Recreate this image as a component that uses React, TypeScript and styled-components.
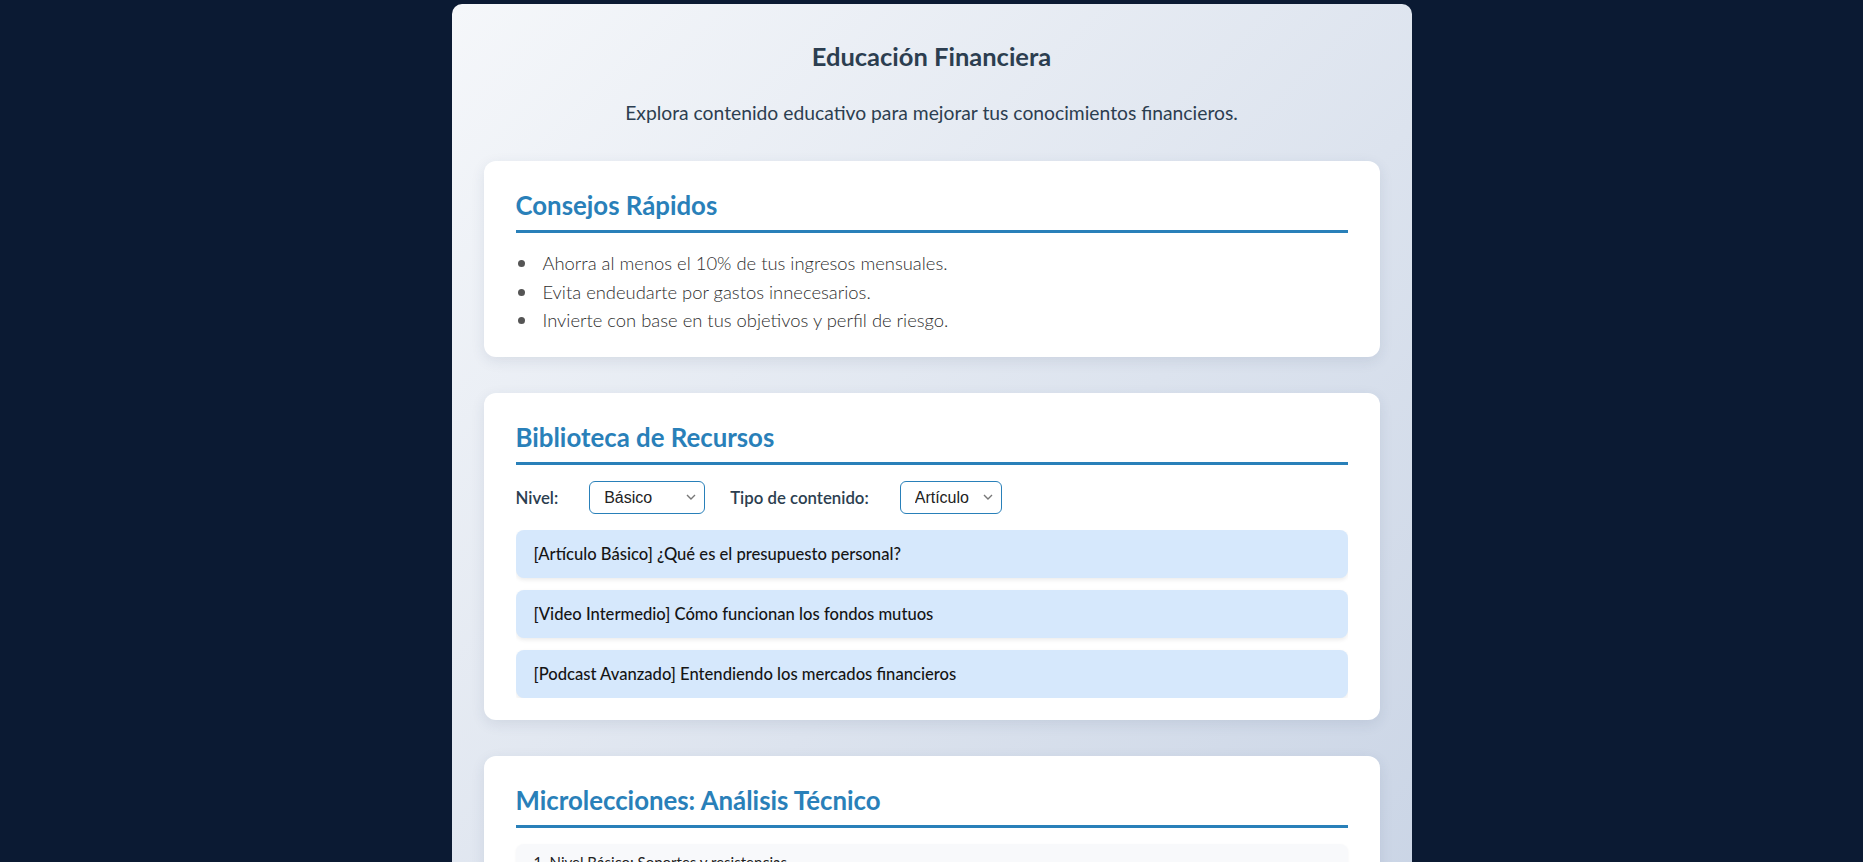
import React, { useState } from 'react'
import styled, { createGlobalStyle } from 'styled-components'

const GlobalStyle = createGlobalStyle`
  html, body {
    margin: 0;
    padding: 0;
    background: #0b1a33;
    overflow: hidden;
  }
  body {
    font-family: Lato, "Open Sans", sans-serif;
  }
`

const Page = styled.main`
  width: 960px;
  margin: 4px auto 0;
  padding: 36px 32px 32px;
  box-sizing: border-box;
  border-radius: 10px;
  min-height: 1200px;
  background: linear-gradient(135deg, #f5f7fa 0%, #c3cfe2 100%);
`

const Title = styled.h1`
  margin: 0;
  font-size: 25.5px;
  line-height: 32px;
  font-weight: 700;
  color: #2c3e50;
  text-align: center;
`

const Subtitle = styled.p`
  margin: 27px 0 34px;
  font-size: 19.3px;
  line-height: 28px;
  color: #2c3e50;
  text-align: center;
`

const Card = styled.section`
  background: #fff;
  border-radius: 12px;
  padding: 28px 32px 22px;
  margin-bottom: 36px;
  box-shadow: 0 4px 14px rgba(40, 60, 100, 0.1);
`

const CardTitle = styled.h2`
  margin: 0 0 16px;
  padding-bottom: 9px;
  font-size: 25.8px;
  line-height: 32px;
  font-weight: 700;
  color: #2980b9;
  border-bottom: 3px solid #2980b9;
`

const TipList = styled.ul`
  margin: 15px 0 0;
  padding: 0;
  list-style: none;
`

const Tip = styled.li`
  position: relative;
  padding-left: 27px;
  font-size: 18.4px;
  font-weight: 300;
  line-height: 28.5px;
  color: #2e2e2e;

  &::before {
    content: '';
    position: absolute;
    left: 2px;
    top: 11px;
    width: 7px;
    height: 7px;
    border-radius: 50%;
    background: #555;
  }
`

const FilterRow = styled.div`
  display: flex;
  align-items: center;
  gap: 25px;
  margin-bottom: 16px;
`

const FilterLabel = styled.label`
  font-size: 16.8px;
  font-weight: 600;
  color: #2c3e50;
  margin-right: 6px;
`

const Select = styled.select<{ $w: number }>`
  width: ${(p) => p.$w}px;
  height: 33px;
  padding: 0 8px 0 14px;
  appearance: none;
  font-family: Arial, "Liberation Sans", sans-serif;
  font-size: 16px;
  color: #222;
  background-color: #fff;
  background-image: url("data:image/svg+xml,%3Csvg xmlns='http://www.w3.org/2000/svg' width='10' height='6' viewBox='0 0 10 6'%3E%3Cpath d='M1 1l4 4 4-4' fill='none' stroke='%23777' stroke-width='1.4'/%3E%3C/svg%3E");
  background-repeat: no-repeat;
  background-position: right 8px center;
  border: 1px solid #2980b9;
  border-radius: 6px;
`

const ResourceList = styled.div`
  display: flex;
  flex-direction: column;
  gap: 12px;
  max-height: 168px;
  overflow: hidden;
`

const ResourceItem = styled.div`
  flex: none;
  background: #d6e8fc;
  border-radius: 8px;
  padding: 12px 18px;
  font-size: 16.6px;
  font-weight: 500;
  line-height: 24px;
  color: #151515;
  box-shadow: 0 2px 4px rgba(0, 0, 0, 0.08);
`

const Lesson = styled.div`
  background: #f8f9fb;
  border-radius: 8px;
  padding: 7px 18px;
  font-size: 15px;
  line-height: 22px;
  color: #222;
  box-shadow: 0 1px 3px rgba(0, 0, 0, 0.05);
`

const tips = [
  'Ahorra al menos el 10% de tus ingresos mensuales.',
  'Evita endeudarte por gastos innecesarios.',
  'Invierte con base en tus objetivos y perfil de riesgo.',
]

const resources = [
  { type: 'Artículo', level: 'Básico', title: '¿Qué es el presupuesto personal?' },
  { type: 'Video', level: 'Intermedio', title: 'Cómo funcionan los fondos mutuos' },
  { type: 'Podcast', level: 'Avanzado', title: 'Entendiendo los mercados financieros' },
]

export default function App() {
  const [level, setLevel] = useState('Básico')
  const [kind, setKind] = useState('Artículo')

  return (
    <>
      <GlobalStyle />
      <Page>
        <Title>Educación Financiera</Title>
        <Subtitle>
          Explora contenido educativo para mejorar tus conocimientos financieros.
        </Subtitle>

        <Card>
          <CardTitle>Consejos Rápidos</CardTitle>
          <TipList>
            {tips.map((t) => (
              <Tip key={t}>{t}</Tip>
            ))}
          </TipList>
        </Card>

        <Card>
          <CardTitle>Biblioteca de Recursos</CardTitle>
          <FilterRow>
            <FilterLabel htmlFor="nivel">Nivel:</FilterLabel>
            <Select
              id="nivel"
              $w={116}
              value={level}
              onChange={(e) => setLevel(e.target.value)}
            >
              <option>Básico</option>
              <option>Intermedio</option>
              <option>Avanzado</option>
            </Select>
            <FilterLabel htmlFor="tipo">Tipo de contenido:</FilterLabel>
            <Select
              id="tipo"
              $w={102}
              value={kind}
              onChange={(e) => setKind(e.target.value)}
            >
              <option>Artículo</option>
              <option>Video</option>
              <option>Podcast</option>
            </Select>
          </FilterRow>
          <ResourceList>
            {resources.map((r) => (
              <ResourceItem key={r.title}>
                [{r.type} {r.level}] {r.title}
              </ResourceItem>
            ))}
          </ResourceList>
        </Card>

        <Card>
          <CardTitle>Microlecciones: Análisis Técnico</CardTitle>
          <Lesson>1. Nivel Básico: Soportes y resistencias</Lesson>
        </Card>
      </Page>
    </>
  )
}
